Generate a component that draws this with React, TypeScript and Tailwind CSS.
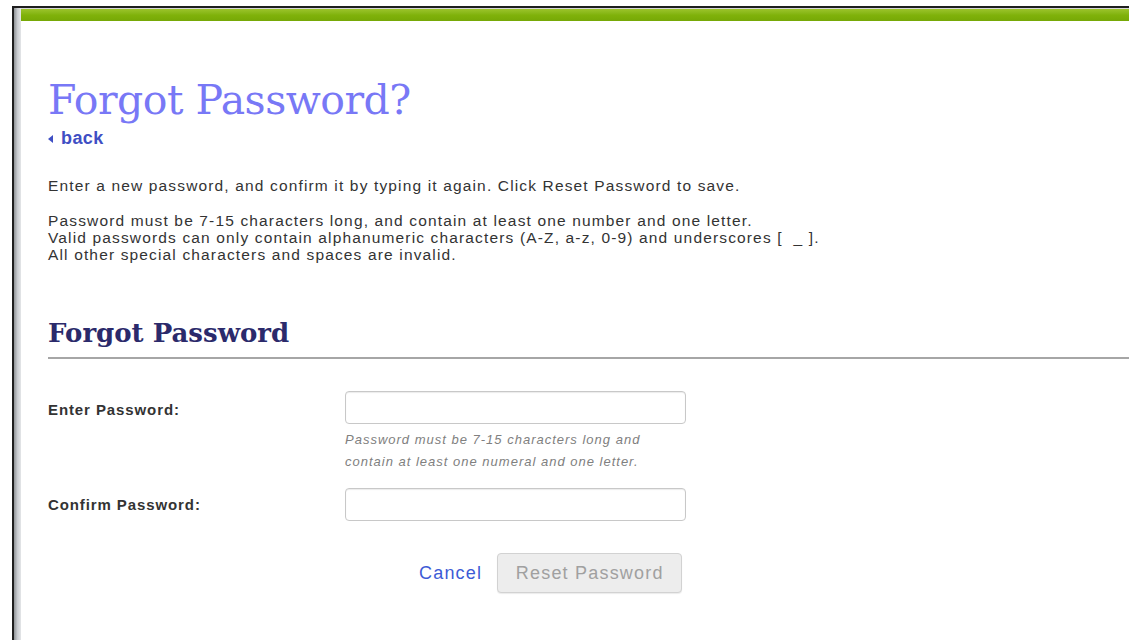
import { useState } from "react";

const sans = { fontFamily: '"Liberation Sans", Arial, sans-serif' };
const serif = { fontFamily: '"DejaVu Serif", "Liberation Serif", serif' };

export default function App() {
  const [password, setPassword] = useState("");
  const [confirm, setConfirm] = useState("");

  return (
    <div className="min-h-[640px] w-[1129px] overflow-hidden bg-white pl-[12px] pt-[6px]" style={sans}>
      <div className="flex min-h-[634px] border-l-2 border-t-2 border-[#1e1e1e]">
        {/* left shaded edge of the frame */}
        <div className="w-[7px] shrink-0 bg-gradient-to-r from-[#8f9396] via-[#c9ccd0] to-[#e4e6e8]" />

        <div className="flex-1">
          <div className="h-[1px] bg-[#d6d6d6]" />
          <div className="h-[12px] bg-gradient-to-b from-[#9cc42a] via-[#80b20a] to-[#76a806]" />

          <main className="pl-[27px] pt-[55px]">
            <h1 className="text-[41px] leading-[48px] tracking-[-0.5px] text-[#7878f6]" style={serif}>
              Forgot Password?
            </h1>
            <a href="#" className="mt-[4px] flex items-center gap-[8px] text-[18px] leading-[20px] font-bold tracking-[0.4px] text-[#3f4fc4]">
              <svg width="5" height="8" viewBox="0 0 5 8" className="mt-[1px]">
                <path d="M5 0 L0 4 L5 8 Z" fill="#3f4fc4" />
              </svg>
              back
            </a>

            <div className="text-[15.5px] leading-[17px] tracking-[1.15px] text-[#333]">
              <p className="mt-[29px]">
                Enter a new password, and confirm it by typing it again. Click Reset Password to save.
              </p>
              <p className="mt-[18px]">
                Password must be 7-15 characters long, and contain at least one number and one letter.
                <br />
                Valid passwords can only contain alphanumeric characters (A-Z, a-z, 0-9) and underscores [ &nbsp;_ ].
                <br />
                All other special characters and spaces are invalid.
              </p>
            </div>

            <h2 className="mt-[55px] text-[26px] leading-[30px] font-bold text-[#2b2a6b]" style={serif}>
              Forgot Password
            </h2>
            <div className="mt-[9px] h-[2px] bg-[#a6a6a6]" />

            <form className="mt-[32px]" onSubmit={(e) => e.preventDefault()}>
              <div className="flex items-start">
                <label className="w-[297px] pt-[10px] text-[15px] leading-[17px] font-bold tracking-[0.9px] text-[#333]">
                  Enter Password:
                </label>
                <div>
                  <input
                    type="password"
                    value={password}
                    onChange={(e) => setPassword(e.target.value)}
                    className="block h-[33px] w-[341px] rounded-[4px] border border-[#c8c8c8] bg-white px-2 text-[14px] shadow-[inset_0_1px_1px_rgba(0,0,0,0.08)] focus:outline-none"
                  />
                  <p className="mt-[5px] text-[13px] leading-[22px] italic tracking-[1px] text-[#808080]">
                    Password must be 7-15 characters long and
                    <br />
                    contain at least one numeral and one letter.
                  </p>
                </div>
              </div>

              <div className="mt-[15px] flex items-start">
                <label className="w-[297px] pt-[8px] text-[15px] leading-[17px] font-bold tracking-[0.9px] text-[#333]">
                  Confirm Password:
                </label>
                <input
                  type="password"
                  value={confirm}
                  onChange={(e) => setConfirm(e.target.value)}
                  className="block h-[33px] w-[341px] rounded-[4px] border border-[#c8c8c8] bg-white px-2 text-[14px] shadow-[inset_0_1px_1px_rgba(0,0,0,0.08)] focus:outline-none"
                />
              </div>

              <div className="mt-[32px] flex items-center gap-[15px] pl-[371px]">
                <a href="#" className="text-[18px] leading-[22px] tracking-[1.2px] text-[#3d5bd6]">
                  Cancel
                </a>
                <button
                  type="submit"
                  disabled
                  className="h-[40px] w-[185px] rounded-[4px] border border-[#d2d2d2] bg-[#ededed] text-[18px] tracking-[1.2px] text-[#a0a0a0] shadow-[0_1px_1px_rgba(0,0,0,0.08)]"
                >
                  Reset Password
                </button>
              </div>
            </form>
          </main>
        </div>
      </div>
    </div>
  );
}
